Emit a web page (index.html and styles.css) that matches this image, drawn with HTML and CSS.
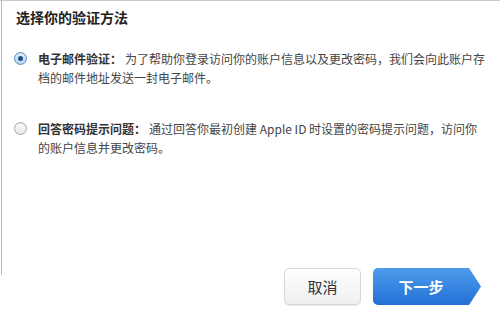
FILE: index.html
```html
<!DOCTYPE html>
<html lang="zh-CN">
<head>
<meta charset="utf-8">
<link rel="stylesheet" href="styles.css">
</head>
<body>
<div class="dialog">
  <div class="rail"></div>
  <div class="content">
    <h1 class="title">选择你的验证方法</h1>
    <div class="option option-first">
      <span class="radio radio-on"><span class="dot"></span></span>
      <p class="text"><b class="label">电子邮件验证：</b>为了帮助你登录访问你的账户信息以及更改密码，我们会向此账户存<br>档的邮件地址发送一封电子邮件。</p>
    </div>
    <div class="option option-second">
      <span class="radio"></span>
      <p class="text"><b class="label">回答密码提示问题：</b>通过回答你最初创建 Apple ID 时设置的密码提示问题，访问你<br>的账户信息并更改密码。</p>
    </div>
    <div class="footer">
      <button class="btn btn-cancel">取消</button>
      <button class="btn btn-next">下一步</button>
    </div>
  </div>
</div>
</body>
</html>
```
FILE: styles.css
```css
html, body {
  margin: 0;
  padding: 0;
  background: #fff;
}
body {
  width: 500px;
  height: 313px;
  overflow: hidden;
  font-family: "Noto Sans CJK SC", "Noto Sans", sans-serif;
}
.dialog {
  display: flex;
  height: 312px;
  border-top: 1px solid #c9c9c9;
}
.rail {
  width: 1px;
  height: 274px;
  margin-left: 1px;
  background: #b8b8b8;
  flex: none;
}
.content {
  flex: 1;
  display: flex;
  flex-direction: column;
}
.title {
  margin: 6px 0 0 14px;
  font-size: 14px;
  line-height: 20px;
  font-weight: bold;
  color: #222;
}
.option {
  display: flex;
  align-items: flex-start;
  padding-left: 12px;
}
.option-first {
  margin-top: 22px;
}
.option-second {
  margin-top: 32px;
}
.radio {
  width: 11px;
  height: 11px;
  border-radius: 50%;
  border: 1px solid #a9a9a9;
  background: linear-gradient(#fdfdfd, #e6e6e6);
  margin-top: 3px;
  margin-right: 11px;
  flex: none;
  display: flex;
  align-items: center;
  justify-content: center;
  box-shadow: inset 0 1px 1px rgba(0,0,0,0.08);
}
.radio-on {
  border-color: #5a8fc8;
  background: linear-gradient(#e8f1fb, #b9d3ef);
}
.dot {
  width: 5px;
  height: 5px;
  border-radius: 50%;
  background: #1f4f8a;
}
.text {
  margin: 0;
  white-space: nowrap;
  font-size: 12px;
  line-height: 19px;
  color: #444;
}
.label {
  display: inline-block;
  margin-right: 3px;
  color: #333;
}
.footer {
  margin-top: auto;
  display: flex;
  justify-content: flex-end;
  gap: 12px;
  padding: 0 19px 8px 0;
}
.btn {
  font-family: "Noto Sans CJK SC", "Noto Sans", sans-serif;
  font-size: 15px;
  height: 37px;
  padding: 0;
  cursor: pointer;
}
.btn-cancel {
  width: 77px;
  border: 1px solid #d6d6d6;
  border-radius: 5px;
  background: linear-gradient(#ffffff, #efefef);
  color: #333;
  box-shadow: 0 1px 1px rgba(0,0,0,0.08);
}
.btn-next {
  width: 108px;
  border: none;
  border-radius: 5px 0 0 5px;
  background: linear-gradient(#4d9cea, #2370d6);
  color: #fff;
  font-weight: bold;
  padding-right: 12px;
  clip-path: polygon(0 0, calc(100% - 12px) 0, 100% 50%, calc(100% - 12px) 100%, 0 100%);
}
```
